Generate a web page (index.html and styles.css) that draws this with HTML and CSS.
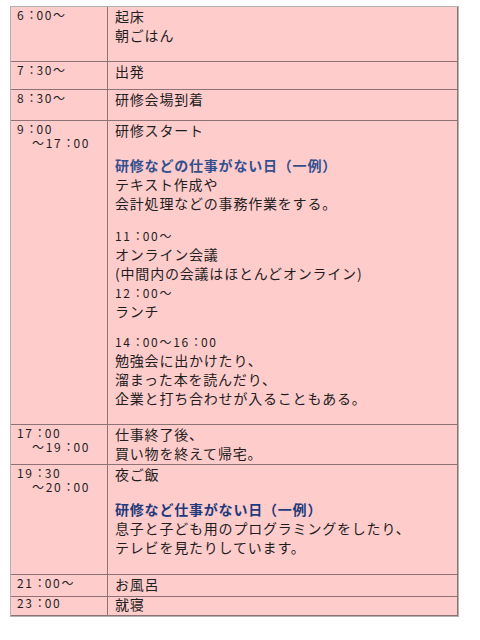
FILE: index.html
```html
<!DOCTYPE html>
<html lang="ja">
<head>
<meta charset="utf-8">
<title>一日のスケジュール</title>
<link rel="stylesheet" href="styles.css">
</head>
<body>
<div class="sched">
  <div class="time"><span class="ln">6<span class="c">：</span>00～</span></div>
  <div class="desc"><p>起床</p><p>朝ごはん</p></div>

  <div class="time"><span class="ln">7<span class="c">：</span>30～</span></div>
  <div class="desc"><p>出発</p></div>

  <div class="time"><span class="ln">8<span class="c">：</span>30～</span></div>
  <div class="desc"><p>研修会場到着</p></div>

  <div class="time"><span class="ln">9<span class="c">：</span>00</span><span class="ln ind">～17<span class="c">：</span>00</span></div>
  <div class="desc">
    <p>研修スタート</p>
    <p class="head g1">研修などの仕事がない日（一例）</p>
    <p>テキスト作成や</p>
    <p>会計処理などの事務作業をする。</p>
    <p class="tm g2">11<span class="c">：</span>00～</p>
    <p>オンライン会議</p>
    <p>(中間内の会議はほとんどオンライン)</p>
    <p class="tm">12<span class="c">：</span>00～</p>
    <p>ランチ</p>
    <p class="tm g3">14<span class="c">：</span>00～16<span class="c">：</span>00</p>
    <p>勉強会に出かけたり、</p>
    <p>溜まった本を読んだり、</p>
    <p>企業と打ち合わせが入ることもある。</p>
  </div>

  <div class="time"><span class="ln">17<span class="c">：</span>00</span><span class="ln ind">～19<span class="c">：</span>00</span></div>
  <div class="desc"><p>仕事終了後、</p><p>買い物を終えて帰宅。</p></div>

  <div class="time"><span class="ln">19<span class="c">：</span>30</span><span class="ln ind">～20<span class="c">：</span>00</span></div>
  <div class="desc">
    <p>夜ご飯</p>
    <p class="head dark g1">研修など仕事がない日（一例）</p>
    <p>息子と子ども用のプログラミングをしたり、</p>
    <p>テレビを見たりしています。</p>
  </div>

  <div class="time"><span class="ln">21<span class="c">：</span>00～</span></div>
  <div class="desc"><p>お風呂</p></div>

  <div class="time short"><span class="ln">23<span class="c">：</span>00</span></div>
  <div class="desc short"><p>就寝</p></div>
</div>
</body>
</html>
```

FILE: styles.css
```css
html, body {
  margin: 0;
  padding: 0;
  background: #ffffff;
}

body {
  font-family: "Noto Sans CJK JP", sans-serif;
  font-size: 14px;
  color: #1e1e1e;
}

.sched {
  display: grid;
  grid-template-columns: 97px 350px;
  grid-template-rows: 55px 28px 31px 304px 40px 110px 22px 19px;
  width: max-content;
  margin: 6px 0 0 10px;
  border: 1px solid #b2b2b2;
  background: #ffcccc;
}

.time,
.desc {
  box-sizing: border-box;
  border-right: 1px solid #8e7276;
  border-bottom: 1px solid #8e7276;
}

.time {
  display: flex;
  flex-direction: column;
  padding: 1px 0 0 6px;
  font-size: 12px;
  letter-spacing: 1.7px;
}

.time .ln {
  display: block;
  height: 14px;
  line-height: 14px;
}

.desc {
  padding: 0 0 0 7px;
  line-height: 19px;
  letter-spacing: 0.8px;
}

.desc p {
  margin: 0;
}

.desc .tm {
  font-size: 12px;
  letter-spacing: 1.7px;
}

.c {
  letter-spacing: -1px;
}

.ind {
  padding-left: 15px;
}

.head {
  font-weight: bold;
  color: #33508e;
}

.head.dark {
  color: #1f3a7c;
}

.g1 {
  margin-top: 16px !important;
}

.g2 {
  margin-top: 13px !important;
}

.g3 {
  margin-top: 11px !important;
}

.time.short {
  padding-top: 0;
}

.time.short .ln {
  line-height: 12px;
}

.desc.short {
  line-height: 15px;
}
```
